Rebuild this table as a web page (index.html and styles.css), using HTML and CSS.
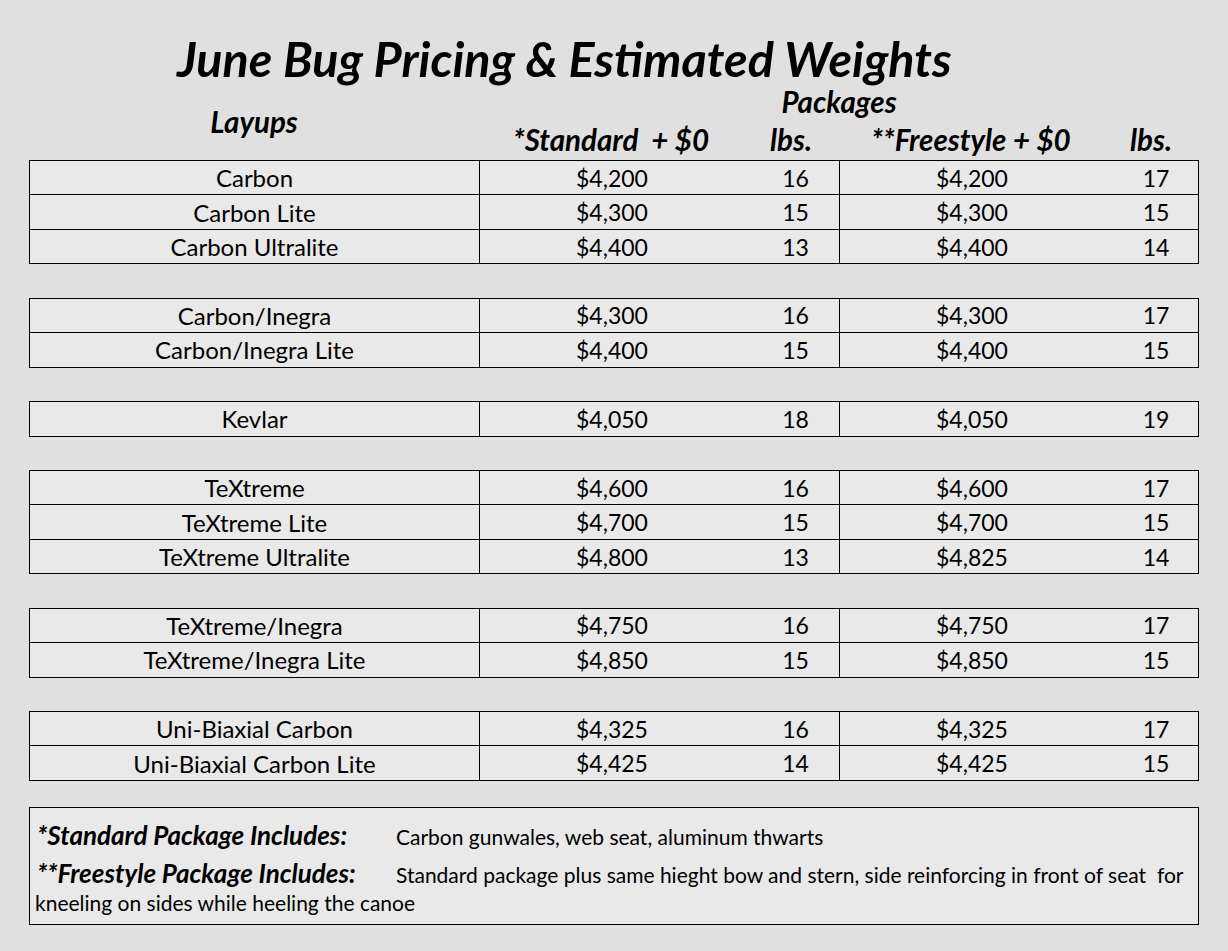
FILE: index.html
```html
<!DOCTYPE html>
<html>
<head>
<meta charset="utf-8">
<link rel="stylesheet" href="styles.css">
</head>
<body>
<div class="sheet">
  <h1 class="title">June Bug Pricing &amp; Estimated Weights</h1>
  <div class="head">
    <div class="h-layups">Layups</div>
    <div class="h-packages">Packages</div>
    <div class="h-std">*Standard&nbsp; + $0</div>
    <div class="h-lbs">lbs.</div>
    <div class="h-free">**Freestyle + $0</div>
    <div class="h-lbs">lbs.</div>
  </div>

  <div class="group">
    <div class="row"><div class="c name">Carbon</div><div class="c price">$4,200</div><div class="c lbs">16</div><div class="c price">$4,200</div><div class="c lbs">17</div></div>
    <div class="row"><div class="c name">Carbon Lite</div><div class="c price">$4,300</div><div class="c lbs">15</div><div class="c price">$4,300</div><div class="c lbs">15</div></div>
    <div class="row"><div class="c name">Carbon Ultralite</div><div class="c price">$4,400</div><div class="c lbs">13</div><div class="c price">$4,400</div><div class="c lbs">14</div></div>
  </div>

  <div class="group">
    <div class="row"><div class="c name">Carbon/Inegra</div><div class="c price">$4,300</div><div class="c lbs">16</div><div class="c price">$4,300</div><div class="c lbs">17</div></div>
    <div class="row"><div class="c name">Carbon/Inegra Lite</div><div class="c price">$4,400</div><div class="c lbs">15</div><div class="c price">$4,400</div><div class="c lbs">15</div></div>
  </div>

  <div class="group">
    <div class="row"><div class="c name">Kevlar</div><div class="c price">$4,050</div><div class="c lbs">18</div><div class="c price">$4,050</div><div class="c lbs">19</div></div>
  </div>

  <div class="group">
    <div class="row"><div class="c name">TeXtreme</div><div class="c price">$4,600</div><div class="c lbs">16</div><div class="c price">$4,600</div><div class="c lbs">17</div></div>
    <div class="row"><div class="c name">TeXtreme Lite</div><div class="c price">$4,700</div><div class="c lbs">15</div><div class="c price">$4,700</div><div class="c lbs">15</div></div>
    <div class="row"><div class="c name">TeXtreme Ultralite</div><div class="c price">$4,800</div><div class="c lbs">13</div><div class="c price">$4,825</div><div class="c lbs">14</div></div>
  </div>

  <div class="group">
    <div class="row"><div class="c name">TeXtreme/Inegra</div><div class="c price">$4,750</div><div class="c lbs">16</div><div class="c price">$4,750</div><div class="c lbs">17</div></div>
    <div class="row"><div class="c name">TeXtreme/Inegra Lite</div><div class="c price">$4,850</div><div class="c lbs">15</div><div class="c price">$4,850</div><div class="c lbs">15</div></div>
  </div>

  <div class="group">
    <div class="row"><div class="c name">Uni-Biaxial Carbon</div><div class="c price">$4,325</div><div class="c lbs">16</div><div class="c price">$4,325</div><div class="c lbs">17</div></div>
    <div class="row"><div class="c name">Uni-Biaxial Carbon Lite</div><div class="c price">$4,425</div><div class="c lbs">14</div><div class="c price">$4,425</div><div class="c lbs">15</div></div>
  </div>

  <div class="notes">
    <p class="note"><b class="lbl">*Standard Package Includes:</b><span>Carbon gunwales, web seat, aluminum thwarts</span></p>
    <p class="note"><b class="lbl">**Freestyle Package Includes:</b><span>Standard package plus same hieght bow and stern, side reinforcing in front of seat&nbsp; for</span></p>
    <p class="note wrap">kneeling on sides while heeling the canoe</p>
  </div>
</div>
</body>
</html>
```

FILE: styles.css
```css
html, body {
  margin: 0;
  padding: 0;
  background: #e0e0e0;
}
body {
  font-family: Lato, "Open Sans", sans-serif;
  color: #000;
  width: 1228px;
  height: 951px;
  overflow: hidden;
}
.sheet {
  padding: 0 29px;
  display: flex;
  flex-direction: column;
}
.title {
  margin: 33px 0 0 148px;
  height: 50px;
  font-size: 48.5px;
  font-weight: 700;
  font-style: italic;
  line-height: 50px;
  white-space: nowrap;
}
.head {
  margin-top: 5px;
  display: grid;
  grid-template-columns: 450px 264px 96px 264px 96px;
  grid-template-rows: 28px 44px;
  font-weight: 700;
  font-style: italic;
  font-size: 29.5px;
  text-align: center;
  white-space: nowrap;
}
.h-layups {
  grid-row: 1 / 3;
  grid-column: 1;
  align-self: center;
  line-height: 36px;
  padding-bottom: 5px;
}
.h-packages {
  grid-row: 1;
  grid-column: 2 / 6;
  align-self: end;
  line-height: 28px;
}
.h-std, .h-free, .h-lbs {
  align-self: end;
  line-height: 36px;
  padding-bottom: 2px;
}
.group {
  border: 1px solid #000;
  background: #e9e9e9;
  margin-bottom: 33.44px;
}
.row {
  display: grid;
  grid-template-columns: 450px 264px 96px 264px 96px;
  height: 33.44px;
  font-size: 23px;
  text-align: center;
}
.row + .row {
  border-top: 1px solid #000;
}
.c {
  display: flex;
  align-items: center;
  justify-content: center;
  white-space: nowrap;
}
.name {
  font-size: 24px;
  border-right: 1px solid #000;
}
.row .c:nth-child(3) {
  border-right: 1px solid #000;
}
.lbs {
  padding-left: 8px;
}
.notes {
  margin-top: -7px;
  border: 1px solid #000;
  background: #e9e9e9;
  height: 118px;
  padding: 9px 8px 0 5px;
  box-sizing: border-box;
}
.note {
  margin: 0;
  font-size: 21px;
  line-height: 36px;
  white-space: nowrap;
}
.note.wrap {
  line-height: 24px;
  margin-top: -2px;
  font-size: 21px;
}
.lbl {
  font-style: italic;
  font-size: 26px;
  display: inline-block;
  width: 361px;
  padding-left: 2px;
  box-sizing: border-box;
}
```
